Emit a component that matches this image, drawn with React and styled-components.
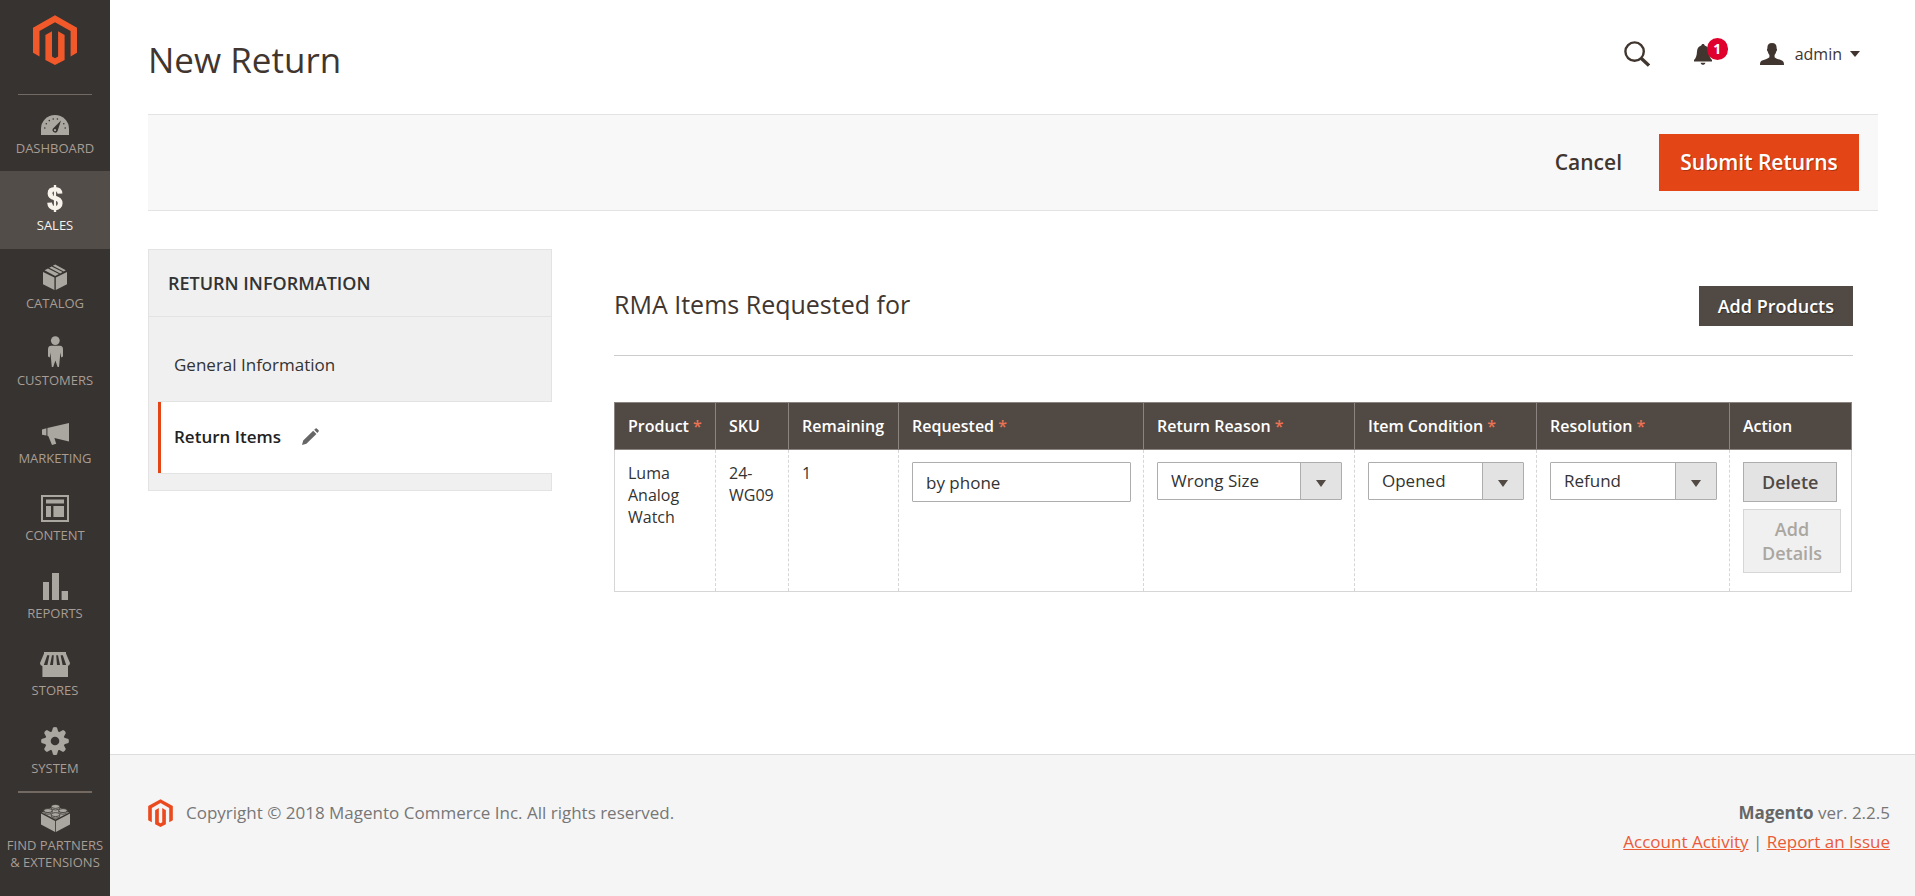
import React from "react";
import styled, { createGlobalStyle, css } from "styled-components";

const GlobalStyle = createGlobalStyle`
  *, *::before, *::after { box-sizing: border-box; }
  body {
    margin: 0;
    background: #fff;
    color: #333;
    font-family: "Open Sans", "Noto Sans", sans-serif;
    font-size: 17px;
    line-height: 24px;
  }
  button, input, select { font-family: inherit; }
`;

const Layout = styled.div`
  display: flex;
  min-height: 100vh;
`;

/* ---------- sidebar ---------- */

const Sidebar = styled.aside`
  flex: 0 0 110px;
  background: #373330;
`;

const LogoLink = styled.a`
  display: flex;
  justify-content: center;
  height: 94px;
  padding-top: 15px;
`;

const Divider = styled.hr`
  height: ${(p) => p.$thickness}px;
  margin: 0 18px -${(p) => p.$thickness}px;
  border: 0;
  background: #736963;
`;

const NavLink = styled.a`
  display: flex;
  flex-direction: column;
  align-items: center;
  gap: 5px;
  min-height: ${(p) => (p.$tall ? 78 : 77)}px;
  padding-top: 9px;
  background: ${(p) => (p.$active ? "#524d49" : "transparent")};
  color: ${(p) => (p.$active ? "#f7f3eb" : "#a79d95")};
  font-size: 13px;
  line-height: 17px;
  text-align: center;
  text-transform: uppercase;
  text-decoration: none;
  white-space: pre-line;
`;

const NavIcon = styled.span`
  display: flex;
  align-items: flex-end;
  height: 32px;
  color: ${(p) => (p.$active ? "#f7f3eb" : "#aaa6a0")};
  --cut: ${(p) => (p.$active ? "#524d49" : "#373330")};
  svg { display: block; }
`;

const MagentoMark = ({ width, height, color }) => (
  <svg width={width} height={height} viewBox="0 0 44 50" fill={color} aria-hidden="true">
    <path d="M22 0.3 44 12.7V37.8L37.6 41.4V16L22 7.2 6.5 16V41.4L0 37.8V12.7Z" />
    <path d="M12.4 20 19 16.2V41.6L22 43.2 25.1 41.6V16.2L31.6 20V45L22 50 12.4 45Z" />
  </svg>
);

const icons = {
  dashboard: (
    <svg width="28" height="20" viewBox="0 0 28 20" fill="currentColor">
      <path d="M0 20V14A14 14 0 0 1 28 14V20Z" />
      <g fill="var(--cut)">
        <circle cx="3.8" cy="13" r="0.8" />
        <circle cx="5.3" cy="8.8" r="0.8" />
        <circle cx="8.3" cy="5.6" r="0.8" />
        <circle cx="12.2" cy="4" r="0.8" />
        <circle cx="16.4" cy="4" r="0.8" />
        <circle cx="22.8" cy="8.8" r="0.8" />
        <circle cx="24.2" cy="13" r="0.8" />
        <path d="M20 5.4 16.6 16A2.6 2.6 0 1 1 12 13.6Z" />
      </g>
      <circle cx="14" cy="15.2" r="1.1" />
    </svg>
  ),
  sales: (
    <svg width="16" height="27" viewBox="0 0 16 27" fill="none" stroke="currentColor">
      <path d="M13 8.6C12.8 5.6 11 4.4 8 4.4 4.8 4.4 3 5.8 3 8.4 3 11.4 5.4 12.2 8 13 10.8 13.8 13.2 15 13.2 18.2 13.2 21 11.2 22.8 8 22.8 4.6 22.8 2.8 21 2.6 17.6" strokeWidth="4.8" />
      <path d="M8 0V27" strokeWidth="2.4" />
      <path d="M6.4 6.5V11M6.4 16V21M9.6 6.5V11M9.6 16V21" stroke="var(--cut)" strokeWidth=".6" />
    </svg>
  ),
  catalog: (
    <svg width="24" height="26" viewBox="0 0 24 26" fill="currentColor">
      <path d="M0 8 11.4 13.6V26L0 20.2ZM24 8 12.8 13.6V26L24 20.2Z" />
      <path d="M1.6 6.3 5 4.4 16 10 12.2 12.1ZM6.3 3.7 8.6 2.5 19.6 8 17.2 9.4ZM9.8 1.8 12.2 0.4 22.8 6.2 20.8 7.4Z" />
    </svg>
  ),
  customers: (
    <svg width="15" height="31" viewBox="0 0 15 31" fill="currentColor">
      <circle cx="7.3" cy="4.6" r="4.4" />
      <path d="M3 9.8H12C14 9.8 15 11.2 15 13.4V20.6L13.2 21.4 12.4 16.6 11 31H9.6L7.4 24.6 5.2 31H3.8L2.4 16.6 1.8 21.4 0 20.6V13.4C0 11.2 1 9.8 3 9.8Z" />
    </svg>
  ),
  marketing: (
    <svg width="27" height="22" viewBox="0 0 27 22" fill="currentColor">
      <path d="M0 6.4 4.4 5.2V12.6L0 11.8ZM5.4 5 27 0V18.4L12.4 15 14.2 20.8 10 22 6.4 13.2 5.4 12.8Z" />
    </svg>
  ),
  content: (
    <svg width="28" height="27" viewBox="0 0 28 27">
      <path d="M1 1H27V26H1Z" fill="none" stroke="currentColor" strokeWidth="2" />
      <path d="M5 4.5H23V8.5H5ZM5 11H10V22H5ZM12.4 11H23V22H12.4Z" fill="currentColor" />
    </svg>
  ),
  reports: (
    <svg width="25" height="27" viewBox="0 0 25 27" fill="currentColor">
      <path d="M0 9H6V27H0ZM9 0H16V27H9ZM18.6 18H25V27H18.6Z" />
    </svg>
  ),
  stores: (
    <svg width="30" height="25" viewBox="0 0 30 25" fill="currentColor">
      <path d="M4 0H26V2H4ZM2.4 13H28V25H2.4Z" />
      <path d="M3.8 2H26.2L30 11C30 13 28.6 14 27.2 14H2.8C1.4 14 0 13 0 11Z" />
      <path d="M7.2 3.2H9.4L7.4 13H3.8ZM12 3.2H13.8L13 13H10ZM16.2 3.2H18L20 13H17ZM20.6 3.2H22.8L26.2 13H22.6Z" fill="var(--cut)" />
    </svg>
  ),
  system: (
    <svg width="28" height="28" viewBox="0 0 28 28">
      <g fill="currentColor">
        <circle cx="14" cy="14" r="10" />
        {[0, 45, 90, 135, 180, 225, 270, 315].map((a) => (
          <path key={a} d="M10.6 5.5 12 0.6Q14 -0.4 16 0.6L17.4 5.5Z" transform={`rotate(${a} 14 14)`} />
        ))}
      </g>
      <circle cx="14" cy="14" r="4.3" fill="var(--cut)" />
    </svg>
  ),
  partners: (
    <svg width="29" height="28" viewBox="0 0 29 28" fill="currentColor">
      <path d="M0 9.6 14.1 17V28L0 20.6ZM29 9.6 14.9 17V28L29 20.6Z" />
      <path d="M1 8.4 14.5 1.4 28 8.4 14.5 15.6Z" />
      <g stroke="var(--cut)" strokeWidth="0.8">
        <path d="M10.3 2.4V4A4.2 2 0 0 0 18.7 4V2.4Z" />
        <path d="M2.8 6.6V8.2A4.2 2 0 0 0 11.2 8.2V6.6Z" />
        <path d="M17.8 6.6V8.2A4.2 2 0 0 0 26.2 8.2V6.6Z" />
        <path d="M10.3 10.6V12.2A4.2 2 0 0 0 18.7 12.2V10.6Z" />
        <ellipse cx="14.5" cy="2.4" rx="4.2" ry="2" />
        <ellipse cx="7" cy="6.6" rx="4.2" ry="2" />
        <ellipse cx="22" cy="6.6" rx="4.2" ry="2" />
        <ellipse cx="14.5" cy="10.6" rx="4.2" ry="2" />
      </g>
    </svg>
  ),
};

const navItems = [
  { icon: "dashboard", label: "Dashboard" },
  { icon: "sales", label: "Sales", active: true },
  { icon: "catalog", label: "Catalog" },
  { icon: "customers", label: "Customers" },
  { icon: "marketing", label: "Marketing" },
  { icon: "content", label: "Content" },
  { icon: "reports", label: "Reports" },
  { icon: "stores", label: "Stores" },
  { icon: "system", label: "System" },
];

const NavItem = ({ icon, label, active, tall }) => (
  <NavLink href="#" $active={active} $tall={tall}>
    <NavIcon $active={active} aria-hidden="true">{icons[icon]}</NavIcon>
    {label}
  </NavLink>
);

/* ---------- page header ---------- */

const Page = styled.div`
  display: flex;
  flex: 1;
  flex-direction: column;
  min-width: 0;
`;

const Header = styled.header`
  display: flex;
  justify-content: space-between;
  height: 114px;
  padding: 36px 55px 0 38px;
`;

const PageTitle = styled.h1`
  margin: 0;
  color: #41362f;
  font-size: 35px;
  font-weight: 400;
  line-height: 48px;
`;

const HeaderTools = styled.div`
  display: flex;
  align-items: center;
  height: 36px;
`;

const IconButton = styled.button`
  position: relative;
  display: flex;
  margin-right: ${(p) => p.$gap}px;
  padding: 0;
  border: 0;
  background: none;
  color: #41362f;
  cursor: pointer;
`;

const Badge = styled.span`
  position: absolute;
  top: -6px;
  left: 13px;
  width: 21px;
  height: 22px;
  border-radius: 11px;
  background: #e0002d;
  color: #fff;
  font-size: 14px;
  font-weight: 700;
  line-height: 22px;
  text-align: center;
`;

const UserButton = styled.button`
  display: flex;
  align-items: center;
  padding: 0;
  border: 0;
  background: none;
  color: #41362f;
  font-size: 16px;
  line-height: 22px;
  cursor: pointer;
  span { margin: 0 8px 0 11px; }
`;

const ActionBar = styled.div`
  display: flex;
  align-items: center;
  justify-content: flex-end;
  gap: 16px;
  height: 97px;
  margin: 0 37px 0 38px;
  padding-right: 19px;
  border: solid #e3e3e3;
  border-width: 1px 0;
  background: #f8f8f8;
`;

const Button = styled.button`
  padding: 7px 18px;
  border: 1px solid transparent;
  font-size: 18px;
  font-weight: 600;
  line-height: 24px;
  cursor: pointer;
  ${(p) => p.$kind === "text" && css`
    padding: 14px 20px;
    background: transparent;
    color: #41362f;
    font-size: 21px;
    line-height: 27px;
  `}
  ${(p) => p.$kind === "primary" && css`
    min-width: 200px;
    padding: 14px 20px;
    border-color: #e34517;
    background: #e34517;
    color: #fff;
    font-size: 21px;
    line-height: 27px;
    text-shadow: 1px 1px 0 rgba(0, 0, 0, 0.25);
  `}
  ${(p) => p.$kind === "dark" && css`
    border-color: #514943;
    background: #514943;
    color: #fff;
    text-shadow: 1px 1px 1px rgba(0, 0, 0, 0.3);
  `}
  ${(p) => p.$kind === "default" && css`
    border-color: #adadad;
    background: #e3e3e3;
    color: #514943;
  `}
  &:disabled {
    border-color: #d6d6d6;
    background: #f0f0f0;
    color: #aaa6a0;
    cursor: default;
  }
`;

/* ---------- content ---------- */

const Columns = styled.main`
  display: grid;
  grid-template-columns: 404px minmax(0, 1fr);
  gap: 62px;
  align-items: start;
  padding: 38px 62px 64px 38px;
`;

const TabsPanel = styled.nav`
  padding-bottom: 16px;
  border: 1px solid #e3e3e3;
  background: #f0f0f0;
`;

const TabsTitle = styled.h2`
  margin: 0 0 14px;
  padding: 21px 19px;
  border-bottom: 1px solid #e3e3e3;
  font-size: 18px;
  font-weight: 600;
  line-height: 24px;
  text-transform: uppercase;
`;

const TabLink = styled.a`
  display: flex;
  align-items: center;
  gap: 21px;
  height: ${(p) => (p.$active ? 73 : 70)}px;
  margin: 0 0 0 9px;
  padding: 0 0 2px 16px;
  color: #333;
  text-decoration: none;
  ${(p) => p.$active && css`
    margin-right: -1px;
    border: solid #e3e3e3;
    border-width: 1px 0;
    background: #fff;
    box-shadow: inset 3px 0 0 #e34517;
    font-weight: 600;
    color: #222;
  `}
`;

const SectionHeader = styled.div`
  display: flex;
  align-items: flex-start;
  justify-content: space-between;
  margin-bottom: 46px;
  padding: 37px 0 29px;
  border-bottom: 1px solid #ccc;
`;

const SectionTitle = styled.h2`
  margin: 0;
  color: #41362f;
  font-size: 25px;
  font-weight: 400;
  line-height: 36px;
`;

const Grid = styled.table`
  width: calc(100% - 1px);
  table-layout: fixed;
  border-collapse: collapse;
  font-size: 16px;
  line-height: 22px;
`;

const Col = styled.col`
  width: ${(p) => (p.$width ? `${p.$width}px` : "auto")};
`;

const Th = styled.th`
  padding: 12px 0 12px 13px;
  border: 1px solid #8a837f;
  background: #514943;
  color: #fff;
  font-weight: 600;
  text-align: left;
  white-space: nowrap;
`;

const Required = styled.span`
  color: #eb7355;
`;

const Td = styled.td`
  padding: 12px 12px 18px 13px;
  border: 1px dashed #d6d6d6;
  border-top: 0;
  border-bottom-style: solid;
  vertical-align: top;
  &:first-child { border-left-style: solid; }
  &:last-child { border-right-style: solid; }
`;

const TextInput = styled.input`
  display: block;
  width: 100%;
  height: 40px;
  padding: 0 13px;
  border: 1px solid #adadad;
  border-radius: 1px;
  background: #fff;
  color: #333;
  font-size: 17px;
`;

const SelectBox = styled.div`
  position: relative;
  svg {
    position: absolute;
    top: 18px;
    right: 16px;
    pointer-events: none;
  }
`;

const Select = styled.select`
  display: block;
  width: 100%;
  height: 38px;
  padding: 0 45px 2px 13px;
  border: 1px solid #adadad;
  border-radius: 1px;
  appearance: none;
  background: linear-gradient(to left, #e3e3e3 40px, #adadad 40px, #adadad 41px, #fff 41px);
  color: #333;
  font-size: 17px;
`;

const Actions = styled.div`
  display: flex;
  flex-direction: column;
  align-items: flex-start;
  gap: 7px;
`;

const Dropdown = ({ label, value }) => (
  <SelectBox>
    <Select aria-label={label} defaultValue={value}>
      <option>{value}</option>
    </Select>
    <svg width="10" height="7" viewBox="0 0 10 7" aria-hidden="true">
      <path d="M0 0H10L5 7Z" fill="#514943" />
    </svg>
  </SelectBox>
);

const gridColumns = [
  { label: "Product", required: true, width: 101 },
  { label: "SKU", width: 73 },
  { label: "Remaining", width: 110 },
  { label: "Requested", required: true },
  { label: "Return Reason", required: true, width: 211 },
  { label: "Item Condition", required: true, width: 182 },
  { label: "Resolution", required: true, width: 193 },
  { label: "Action", width: 122 },
];

/* ---------- footer ---------- */

const Footer = styled.footer`
  display: flex;
  justify-content: space-between;
  min-height: 142px;
  margin-top: auto;
  padding: 43px 25px 0 38px;
  border-top: 1px solid #ddd;
  background: #f5f5f5;
  color: #777;
  line-height: 29px;
`;

const Copyright = styled.div`
  display: flex;
  align-items: center;
  align-self: flex-start;
  gap: 13px;
`;

const FooterLinks = styled.div`
  text-align: right;
  strong { color: #666; font-weight: 700; }
  a { color: #eb5a38; }
`;

export default function App() {
  return (
    <Layout>
      <GlobalStyle />
      <Sidebar>
        <LogoLink href="#" aria-label="Magento">
          <MagentoMark width={44} height={50} color="#f1592a" />
        </LogoLink>
        <Divider $thickness={1} />
        <nav>
          {navItems.map((item, i) => (
            <NavItem key={item.icon} {...item} tall={i % 2 === 1} />
          ))}
          <Divider $thickness={2} />
          <NavItem icon="partners" label={"Find Partners\n& Extensions"} />
        </nav>
      </Sidebar>

      <Page>
        <Header>
          <PageTitle>New Return</PageTitle>
          <HeaderTools>
            <IconButton $gap={44} aria-label="Search">
              <svg width="26" height="26" viewBox="0 0 26 26" fill="none" stroke="currentColor">
                <circle cx="10.6" cy="10.6" r="9.2" strokeWidth="2.4" />
                <path d="M17.4 17.4 25 24.6" strokeWidth="3.4" />
              </svg>
            </IconButton>
            <IconButton $gap={48} aria-label="Notifications">
              <svg width="18" height="21" viewBox="0 0 18 21" fill="currentColor">
                <path d="M9 0C10 0 10.6.7 10.7 1.4 13.8 2.2 14.8 4.6 15 7.6 15.2 11.6 16 14.2 18 16V17.4H0V16C2 14.2 2.8 11.6 3 7.6 3.2 4.6 4.2 2.2 7.3 1.4 7.4.7 8 0 9 0ZM6.6 18.8H11.4C11 20.2 10.2 20.8 9 20.8 7.8 20.8 7 20.2 6.6 18.8Z" />
              </svg>
              <Badge>1</Badge>
            </IconButton>
            <UserButton>
              <svg width="24" height="22" viewBox="0 0 24 22" fill="currentColor" aria-hidden="true">
                <path d="M12 0C15.4 0 16.8 2 16.6 5.4 17.4 5.8 17 8 16.2 8.6 15.8 10.4 15.2 11.4 14.6 12V14.2C16 15.8 20 16.6 22.4 17.8 23.6 18.4 24 20 24 22H0C0 20 .4 18.4 1.6 17.8 4 16.6 8 15.8 9.4 14.2V12C8.8 11.4 8.2 10.4 7.8 8.6 7 8 6.6 5.8 7.4 5.4 7.2 2 8.6 0 12 0Z" />
              </svg>
              <span>admin</span>
              <svg width="10" height="6" viewBox="0 0 10 6" aria-hidden="true">
                <path d="M0 0H10L5 6Z" fill="currentColor" />
              </svg>
            </UserButton>
          </HeaderTools>
        </Header>

        <ActionBar>
          <Button $kind="text">Cancel</Button>
          <Button $kind="primary">Submit Returns</Button>
        </ActionBar>

        <Columns>
          <TabsPanel aria-label="Return information">
            <TabsTitle>Return Information</TabsTitle>
            <TabLink href="#">General Information</TabLink>
            <TabLink href="#" $active>
              Return Items
              <svg width="17" height="17" viewBox="0 0 17 17" fill="#666" aria-hidden="true">
                <path d="M0 17 1.2 12.4 11.2 2.8 14.4 6 4.4 15.8ZM12.2 1.8 13.6.5Q14.2 0 14.8.5L16.6 2.3Q17.1 3 16.6 3.5L15.3 5Z" />
              </svg>
            </TabLink>
          </TabsPanel>

          <section>
            <SectionHeader>
              <SectionTitle>RMA Items Requested for</SectionTitle>
              <Button $kind="dark">Add Products</Button>
            </SectionHeader>
            <Grid>
              <colgroup>
                {gridColumns.map((c) => <Col key={c.label} $width={c.width} />)}
              </colgroup>
              <thead>
                <tr>
                  {gridColumns.map((c) => (
                    <Th key={c.label} scope="col">
                      {c.label}
                      {c.required && <Required> *</Required>}
                    </Th>
                  ))}
                </tr>
              </thead>
              <tbody>
                <tr>
                  <Td>Luma Analog Watch</Td>
                  <Td>24-WG09</Td>
                  <Td>1</Td>
                  <Td><TextInput aria-label="Requested" defaultValue="by phone" /></Td>
                  <Td><Dropdown label="Return Reason" value="Wrong Size" /></Td>
                  <Td><Dropdown label="Item Condition" value="Opened" /></Td>
                  <Td><Dropdown label="Resolution" value="Refund" /></Td>
                  <Td>
                    <Actions>
                      <Button $kind="default">Delete</Button>
                      <Button $kind="default" disabled>Add Details</Button>
                    </Actions>
                  </Td>
                </tr>
              </tbody>
            </Grid>
          </section>
        </Columns>

        <Footer>
          <Copyright>
            <MagentoMark width={25} height={28} color="#eb4a1f" />
            Copyright © 2018 Magento Commerce Inc. All rights reserved.
          </Copyright>
          <FooterLinks>
            <div><strong>Magento</strong> ver. 2.2.5</div>
            <div><a href="#">Account Activity</a> | <a href="#">Report an Issue</a></div>
          </FooterLinks>
        </Footer>
      </Page>
    </Layout>
  );
}
